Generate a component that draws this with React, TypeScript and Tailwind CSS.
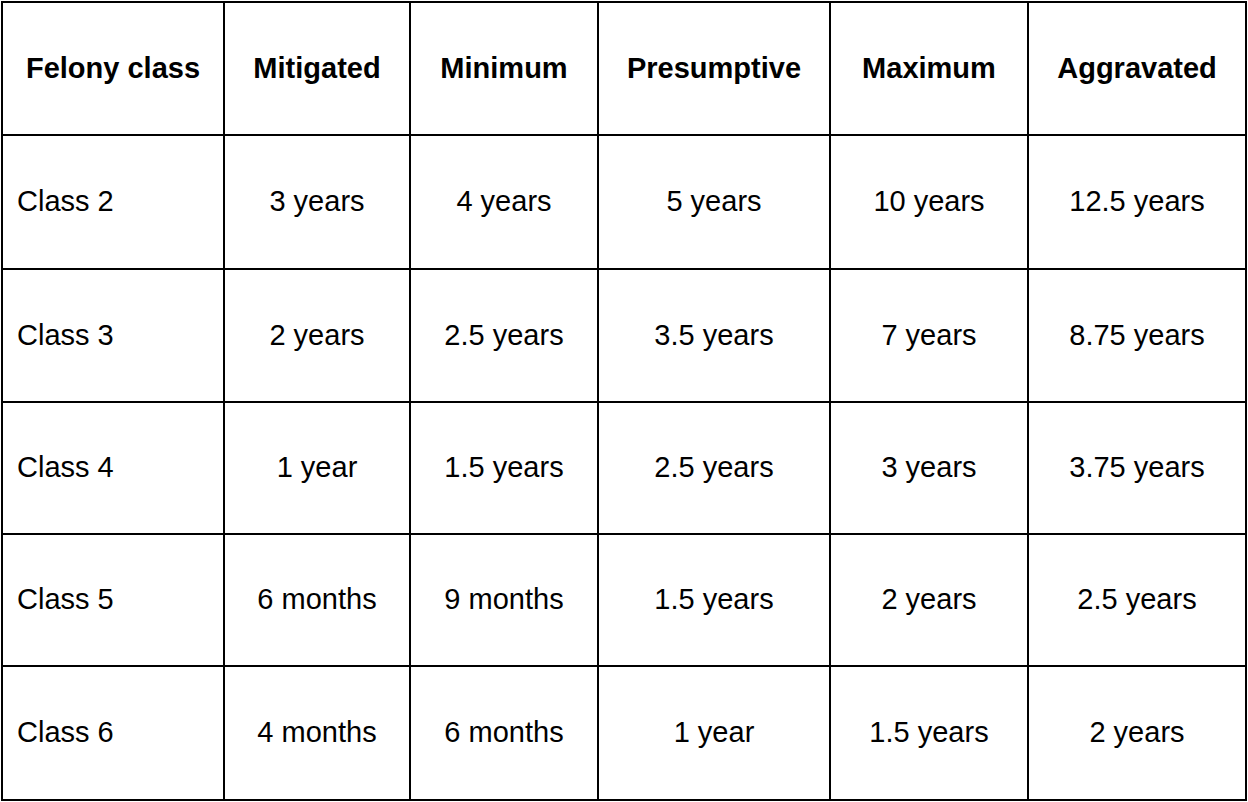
export default function App() {
  const headers = ['Felony class', 'Mitigated', 'Minimum', 'Presumptive', 'Maximum', 'Aggravated']

  const rows = [
    ['Class 2', '3 years', '4 years', '5 years', '10 years', '12.5 years'],
    ['Class 3', '2 years', '2.5 years', '3.5 years', '7 years', '8.75 years'],
    ['Class 4', '1 year', '1.5 years', '2.5 years', '3 years', '3.75 years'],
    ['Class 5', '6 months', '9 months', '1.5 years', '2 years', '2.5 years'],
    ['Class 6', '4 months', '6 months', '1 year', '1.5 years', '2 years'],
  ]

  return (
    <div className="min-h-screen bg-white p-px">
      <div
        className="grid w-fit grid-cols-[222px_186px_188px_232px_198px_218px] grid-rows-[133px_134px_133px_132px_132px_134px] border-l-2 border-t-2 border-black text-[29px] text-black"
        style={{ fontFamily: '"Liberation Sans", Arial, sans-serif' }}
      >
        {headers.map((h) => (
          <div
            key={h}
            className="flex items-center justify-center border-b-2 border-r-2 border-black font-bold"
          >
            {h}
          </div>
        ))}
        {rows.map((row) =>
          row.map((cell, i) => (
            <div
              key={row[0] + i}
              className={`flex items-center border-b-2 border-r-2 border-black ${
                i === 0 ? 'justify-start pl-[14px]' : 'justify-center'
              }`}
            >
              {cell}
            </div>
          ))
        )}
      </div>
    </div>
  )
}
